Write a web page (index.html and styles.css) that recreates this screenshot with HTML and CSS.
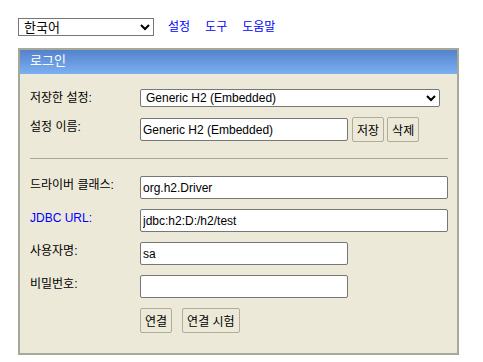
FILE: index.html
```html
<!DOCTYPE html>
<html lang="ko">
<head>
    <meta charset="UTF-8">
    <title>H2 Console</title>
    <link rel="stylesheet" href="styles.css">
</head>
<body>
    <div class="toolbar">
        <select class="lang">
            <option>한국어</option>
        </select>
        <a href="#" class="menu">설정</a>
        <a href="#" class="menu">도구</a>
        <a href="#" class="menu">도움말</a>
    </div>

    <div class="login">
        <div class="login-title">로그인</div>
        <div class="login-body">
            <div class="row first">
                <div class="label">저장한 설정:</div>
                <select class="setting">
                    <option>Generic H2 (Embedded)</option>
                </select>
            </div>
            <div class="row">
                <div class="label">설정 이름:</div>
                <input class="field short" type="text" value="Generic H2 (Embedded)">
                <button class="btn">저장</button>
                <button class="btn">삭제</button>
            </div>

            <div class="line"></div>

            <div class="row">
                <div class="label">드라이버 클래스:</div>
                <input class="field long" type="text" value="org.h2.Driver">
            </div>
            <div class="row">
                <div class="label link">JDBC URL:</div>
                <input class="field long" type="text" value="jdbc:h2:D:/h2/test">
            </div>
            <div class="row">
                <div class="label">사용자명:</div>
                <input class="field short" type="text" value="sa">
            </div>
            <div class="row">
                <div class="label">비밀번호:</div>
                <input class="field short" type="password" value="">
            </div>
            <div class="row buttons">
                <div class="label"></div>
                <button class="btn big">연결</button>
                <button class="btn big gap">연결 시험</button>
            </div>
        </div>
    </div>
</body>
</html>
```

FILE: styles.css
```css
body{
    margin: 0;
    padding: 18px 0 0 18px;
    font-family: "Liberation Sans", Arial, "Noto Sans CJK KR", sans-serif;
    font-size: 12px;
    color: #000;
}
.toolbar{
    display: flex;
    align-items: center;
    height: 18px;
}
.lang{
    width: 136px;
    height: 18px;
    margin: 0;
    padding: 0 1px;
    font-family: inherit;
    font-size: 13px;
    border: 1px solid #767676;
    border-radius: 0;
    background: #fff;
}
.menu{
    margin-left: 14px;
    color: #0000ff;
    text-decoration: none;
    font-size: 12px;
    line-height: 15px;
}
.menu + .menu{
    margin-left: 15px;
}
.login{
    margin-top: 12px;
    width: 441px;
    box-sizing: border-box;
    border: 2px solid #a8a899;
    background: #ece9d8;
}
.login-title{
    height: 24px;
    line-height: 22px;
    padding-left: 10px;
    color: #fff;
    font-size: 13px;
    background: linear-gradient(#5482cc, #7bb0f2);
}
.login-body{
    padding: 15px 0 20px 10px;
}
.row{
    display: flex;
    align-items: flex-start;
    height: 23px;
    margin-bottom: 10px;
}
.first{
    height: 18px;
    margin-bottom: 11px;
}
.label{
    width: 110px;
    flex-shrink: 0;
    padding-top: 2px;
    line-height: 15px;
}
.link{
    color: #0000ff;
}
.setting{
    width: 300px;
    height: 18px;
    margin: 0;
    padding: 0 1px;
    font-family: inherit;
    font-size: 12px;
    border: 1px solid #767676;
    border-radius: 2px;
    background: #fff;
}
.field{
    height: 23px;
    box-sizing: border-box;
    margin: 0;
    padding: 1px 2px;
    font-family: inherit;
    font-size: 12px;
    border: 1px solid #767676;
    border-radius: 2px;
    background: #fff;
}
.short{
    width: 208px;
}
.long{
    width: 308px;
}
.btn{
    height: 25px;
    margin: -1px 0 0 4px;
    padding: 0 4px;
    font-family: inherit;
    font-size: 12px;
    border: 1px solid #b0ad9f;
    border-radius: 2px;
    background: #ece9d8;
    color: #000;
}
.btn + .btn{
    margin-left: 3px;
}
.buttons{
    height: 25px;
    margin-bottom: 0;
}
.buttons .btn{
    margin-left: 0;
    margin-top: 0;
}
.buttons .gap{
    margin-left: 10px;
}
.line{
    width: 418px;
    height: 1px;
    margin: 17px 0 17px 0;
    background: #a8a8a0;
}
```
